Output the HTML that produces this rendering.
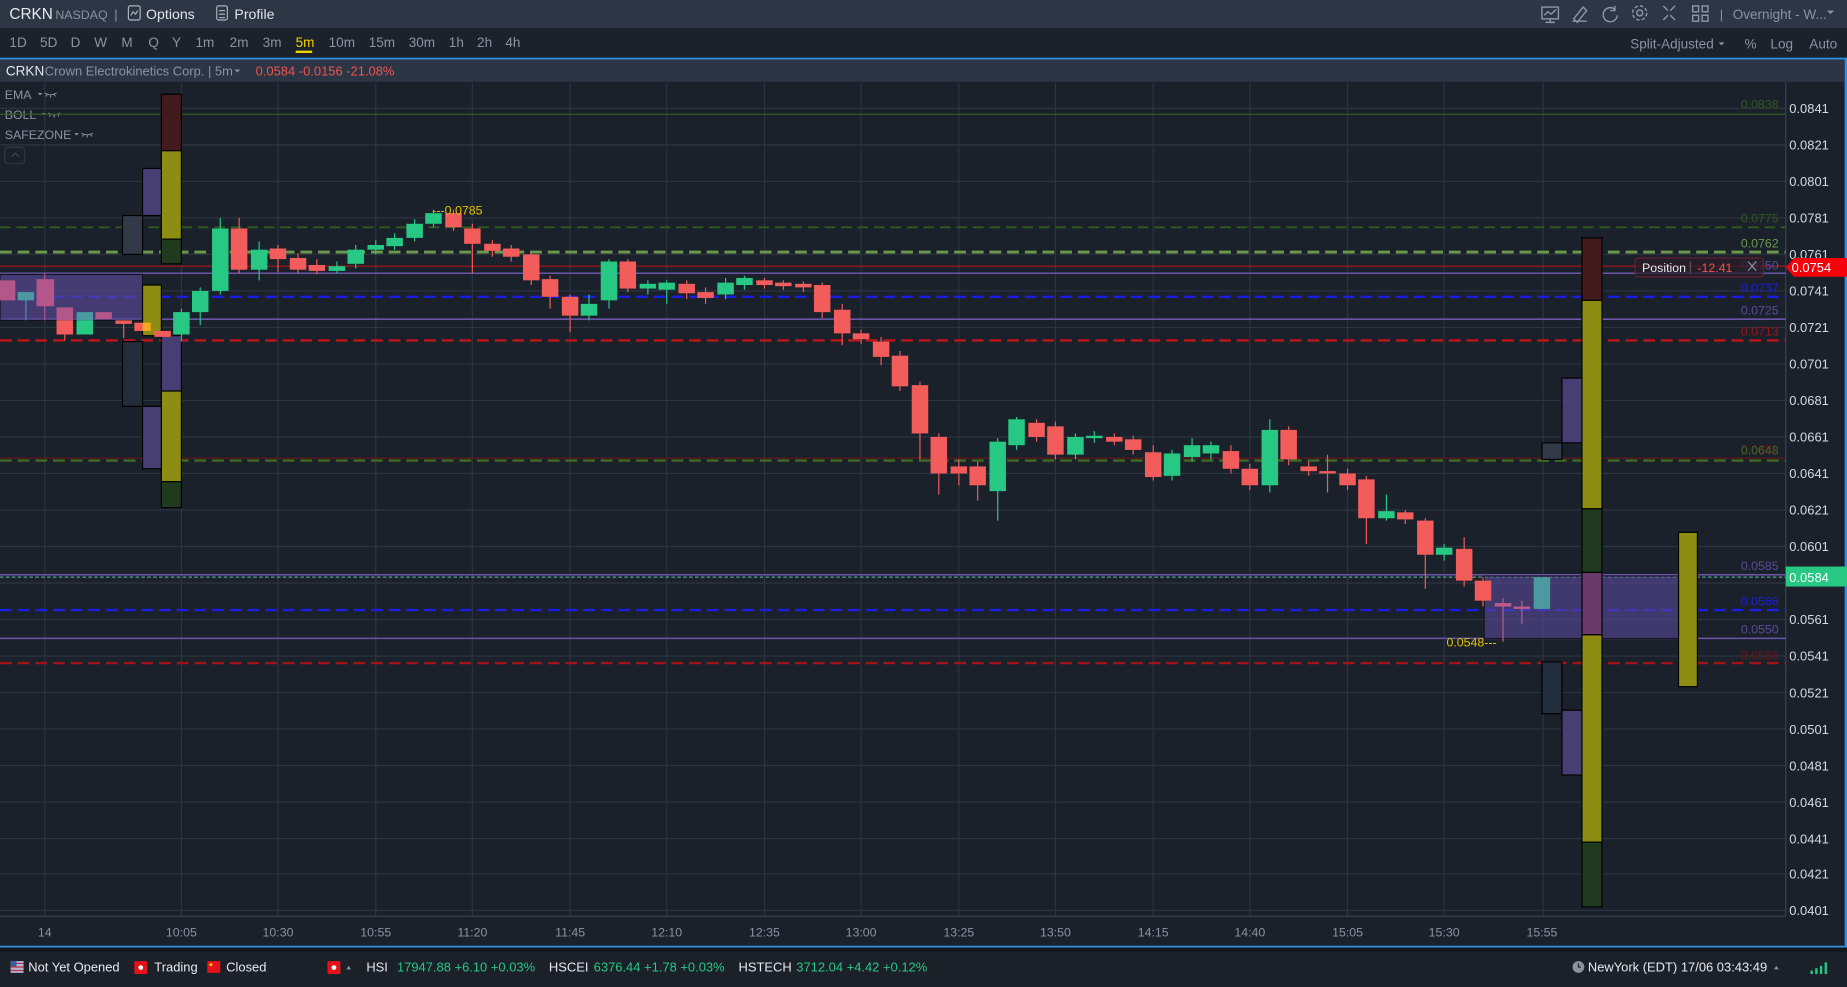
<!DOCTYPE html>
<html><head><meta charset="utf-8"><style>
html,body{margin:0;padding:0;background:#1b212b;overflow:hidden}
svg{display:block}
text{font-family:"Liberation Sans",sans-serif}
</style></head><body>
<svg width="1847" height="987" viewBox="0 0 1568 838" preserveAspectRatio="none" xmlns="http://www.w3.org/2000/svg">
<rect x="0" y="0" width="1568" height="838" fill="#1b212b"/>
<!-- top bar -->
<rect x="0" y="0" width="1568" height="24" fill="#2d3644"/>
<text x="8" y="16" font-size="13" fill="#e6e9ee">CRKN</text>
<text x="47" y="16" font-size="10.5" fill="#8a93a0">NASDAQ</text>
<text x="97" y="16" font-size="11" fill="#8a93a0">|</text>
<rect x="109" y="5" width="10" height="12" rx="1.5" fill="none" stroke="#aab2bd" stroke-width="1"/>
<path d="M111 13 L113 10 L115 12 L117 9" fill="none" stroke="#aab2bd"/>
<text x="124" y="16" font-size="12" fill="#e0e4ea">Options</text>
<rect x="184" y="5" width="9" height="12" rx="1.5" fill="none" stroke="#aab2bd"/>
<path d="M186 9h5M186 12h5M186 15h5" stroke="#aab2bd"/>
<text x="199" y="16" font-size="12" fill="#e0e4ea">Profile</text>
<g fill="none" stroke="#8e97a3" stroke-width="1.2">
<rect x="1309" y="6" width="14" height="10"/><path d="M1316 16v3M1312 19h8M1311 13l3-3 3 2 4-4"/>
<path d="M1335 18h12M1336 16l8-10 3 3-8 10z"/>
<path d="M1371 8a6 6 0 1 0 2 5M1371 5v4h-4"/>
<circle cx="1392" cy="11" r="2.5"/><circle cx="1392" cy="11" r="6" stroke-dasharray="3 1.7"/>
<path d="M1412 5l4 4M1422 5l-4 4M1412 17l4-4M1422 17l-4-4"/>
<rect x="1437" y="5" width="5" height="5"/><rect x="1445" y="5" width="5" height="5"/><rect x="1437" y="13" width="5" height="5"/><rect x="1445" y="13" width="5" height="5"/>
</g>
<text x="1460" y="16" font-size="11" fill="#8a93a0">|</text>
<text x="1471" y="16" font-size="11.5" fill="#8a93a0">Overnight - W...</text>
<path d="M1551 9l3 3 3-3z" fill="#8a93a0"/>
<!-- timeframe bar -->
<rect x="0" y="24" width="1568" height="25" fill="#1c222c"/>
<g font-size="11.5" fill="#8a93a0">
<text x="8" y="40">1D</text><text x="34" y="40">5D</text><text x="60" y="40">D</text><text x="80" y="40">W</text><text x="103" y="40">M</text><text x="126" y="40">Q</text><text x="146" y="40">Y</text><text x="166" y="40">1m</text><text x="195" y="40">2m</text><text x="223" y="40">3m</text><text x="251" y="40" fill="#f2d200">5m</text><text x="279" y="40">10m</text><text x="313" y="40">15m</text><text x="347" y="40">30m</text><text x="381" y="40">1h</text><text x="405" y="40">2h</text><text x="429" y="40">4h</text>
<text x="1384" y="41">Split-Adjusted</text><text x="1481" y="41">%</text><text x="1503" y="41">Log</text><text x="1536" y="41">Auto</text>
</g>
<path d="M1459 36l2.5 2.5 2.5-2.5z" fill="#8a93a0"/>
<rect x="251" y="43" width="14" height="2" fill="#f2d200"/>
<rect x="0" y="49" width="1568" height="1.5" fill="#2e8fe6"/>
<rect x="1566" y="49" width="2" height="755" fill="#2e8fe6"/>
<!-- info bar -->
<rect x="0" y="50.5" width="1566" height="19" fill="#2c3543"/>
<text x="5" y="64" font-size="11.5" fill="#e6e9ee">CRKN</text>
<text x="38" y="64" font-size="11" fill="#8a93a0">Crown Electrokinetics Corp. | 5m</text>
<path d="M199 59l2.5 2.5 2.5-2.5z" fill="#8a93a0"/>
<text x="217" y="64" font-size="11" fill="#f2524f">0.0584 -0.0156 -21.08%</text>
<!-- grid -->
<g stroke="#2c3440" stroke-width="1">
<path d="M0 92H1516M0 123H1516M0 154H1516M0 185H1516M0 216H1516M0 247H1516M0 278H1516M0 309H1516M0 340H1516M0 371H1516M0 402H1516M0 433H1516M0 464H1516M0 495H1516M0 526H1516M0 557H1516M0 588H1516M0 619H1516M0 650H1516M0 681H1516M0 712H1516M0 742H1516M0 773H1516"/>
<path d="M38 70V778M154 70V778M236 70V778M319 70V778M401 70V778M484 70V778M566 70V778M649 70V778M731 70V778M814 70V778M896 70V778M979 70V778M1061 70V778M1144 70V778M1226 70V778M1310 70V778"/>
<path d="M1516 70V778M0 778H1516" stroke="#394250"/>
</g>
<!-- indicators -->
<g font-size="10.5" fill="#8a93a0">
<text x="4" y="84">EMA</text><text x="4" y="101">BOLL</text><text x="4" y="118">SAFEZONE</text>
</g>
<g fill="#8a93a0"><path d="M32 79l2 2 2-2z"/><path d="M35 96l2 2 2-2z"/><path d="M63 113l2 2 2-2z"/></g>
<g fill="none" stroke="#8a93a0" stroke-width="0.8"><path d="M38 79q5 3 10 0M40 80l-1 2M43 81v2M46 80l1 2"/><path d="M41 96q5 3 10 0M43 97l-1 2M46 98v2M49 97l1 2"/><path d="M69 113q5 3 10 0M71 114l-1 2M74 115v2M77 114l1 2"/></g>
<rect x="4" y="125" width="17" height="14" rx="3" fill="none" stroke="#2f3845"/>
<path d="M10 133l3-3 3 3" fill="none" stroke="#3e4754"/>
<!-- level lines -->
<g fill="none">
<path d="M0 97H1516" stroke="#2f5a1e" stroke-width="1"/>
<path d="M0 193H1516" stroke="#2f5a1e" stroke-width="1.5" stroke-dasharray="9 5"/>
<path d="M0 214H1516" stroke="#6a9a4a" stroke-width="2.5" stroke-dasharray="10 5"/>
<path d="M0 226H1516" stroke="#b0151a" stroke-width="1"/>
<path d="M0 232H1516" stroke="#6a55a8" stroke-width="1.3"/>
<path d="M0 252H1516" stroke="#1a1ee0" stroke-width="2" stroke-dasharray="10 5"/>
<path d="M0 271H1516" stroke="#6a55a8" stroke-width="1.3"/>
<path d="M0 289H1516" stroke="#c0141a" stroke-width="2" stroke-dasharray="10 5"/>
<path d="M0 389H1516" stroke="#6a1518" stroke-width="1"/>
<path d="M0 391H1516" stroke="#3f6a22" stroke-width="2" stroke-dasharray="10 5"/>
<path d="M0 488H1516" stroke="#6a55a8" stroke-width="1.3"/>
<path d="M0 490H1516" stroke="#5fc0b0" stroke-width="0.8" stroke-dasharray="3 2"/>
<path d="M0 518H1516" stroke="#1a1ee0" stroke-width="2" stroke-dasharray="10 5"/>
<path d="M0 542H1516" stroke="#6a55a8" stroke-width="1.3"/>
<path d="M0 563H1516" stroke="#a01418" stroke-width="2" stroke-dasharray="10 5"/>
</g>
<g font-size="10.5" text-anchor="end">
<text x="1510" y="92" fill="#2f5a1e">0.0838</text>
<text x="1510" y="189" fill="#2f5a1e">0.0775</text>
<text x="1510" y="210" fill="#6a9a4a">0.0762</text>
<text x="1510" y="229" fill="#5a4a98">0.0750</text>
<text x="1510" y="248" fill="#1a1ee0">0.0737</text>
<text x="1510" y="267" fill="#5a4a98">0.0725</text>
<text x="1510" y="285" fill="#a01418">0.0713</text>
<text x="1510" y="385" fill="#6a1518">0.0651</text>
<text x="1510" y="386" fill="#3f6a22">0.0648</text>
<text x="1510" y="484" fill="#5a4a98">0.0585</text>
<text x="1510" y="514" fill="#1a1ee0">0.0566</text>
<text x="1510" y="538" fill="#5a4a98">0.0550</text>
<text x="1510" y="560" fill="#6a1518">0.0536</text>
</g>
<!-- left purple box -->
<rect x="0" y="233" width="121" height="39" fill="#5a4a9a" fill-opacity="0.65" stroke="#15121f" stroke-width="1"/>
<!-- left volume profile -->
<g stroke="#000" stroke-width="1">
<rect x="137" y="80" width="17" height="48" fill="#431a1c"/>
<rect x="137" y="128" width="17" height="75" fill="#8d8d14"/>
<rect x="137" y="203" width="17" height="21" fill="#1f3a1e"/>
<rect x="121" y="143" width="16" height="40" fill="#473e74"/>
<rect x="104" y="183" width="17" height="33" fill="#323a47"/>
<rect x="121" y="242" width="16" height="43" fill="#8d8d14"/>
<rect x="137" y="285" width="17" height="47" fill="#473e74"/>
<rect x="137" y="332" width="17" height="77" fill="#8d8d14"/>
<rect x="137" y="409" width="17" height="22" fill="#1f3a1e"/>
<rect x="104" y="290" width="17" height="55" fill="#232c3a"/>
<rect x="121" y="345" width="16" height="53" fill="#473e74"/>
</g>
<!-- right volume profile + box -->
<rect x="1260" y="489" width="165" height="53" fill="#5a4a9a" fill-opacity="0.6" stroke="#15121f"/>
<g stroke="#000" stroke-width="1">
<rect x="1343" y="202" width="17" height="53" fill="#431a1c"/>
<rect x="1343" y="255" width="17" height="177" fill="#8d8d14"/>
<rect x="1343" y="432" width="17" height="54" fill="#1f3a1e"/>
<rect x="1343" y="486" width="17" height="53" fill="#6a3a6a"/>
<rect x="1343" y="539" width="17" height="176" fill="#8d8d14"/>
<rect x="1343" y="715" width="17" height="55" fill="#1f3a1e"/>
<rect x="1309" y="376" width="17" height="14" fill="#323a47"/>
<rect x="1309" y="562" width="17" height="44" fill="#232c3a"/>
<rect x="1326" y="321" width="17" height="55" fill="#473e74"/>
<rect x="1326" y="603" width="17" height="55" fill="#473e74"/>
<rect x="1425" y="452" width="16" height="131" fill="#8d8d14"/>
</g>
<!-- left small candles -->
<g>
<rect x="0" y="238" width="13" height="17" fill="#b3568a"/>
<rect x="15" y="248" width="14" height="7" fill="#4a9aa0"/><path d="M22 255v17" stroke="#4a9aa0"/>
<rect x="31" y="237" width="15" height="23" fill="#b3568a"/><path d="M38 232v40" stroke="#b3568a"/>
<rect x="48" y="261" width="14" height="11" fill="#b3568a"/><rect x="48" y="272" width="14" height="12" fill="#f25c5a"/><path d="M55 284v5" stroke="#f25c5a"/>
<rect x="65" y="265" width="14" height="7" fill="#4a9aa0"/><rect x="65" y="272" width="14" height="12" fill="#26c884"/>
<rect x="81" y="265" width="14" height="6" fill="#b3568a"/>
<rect x="98" y="272" width="14" height="3" fill="#f25c5a"/><path d="M105 275v12" stroke="#f25c5a"/>
<rect x="114" y="274" width="7" height="7" fill="#f25c5a"/><rect x="121" y="274" width="7" height="7" fill="#f5a623"/>
<rect x="131" y="281" width="14" height="5" fill="#f25c5a"/>
</g>
<g stroke-width="1">
<g fill="#26c884" stroke="#26c884">
<path d="M154 262V290M170 244V276M187 185V250M220 205V238M286 222V232M302 208V228M319 204V216M335 198V212M352 186V205M368 178V193M500 250V272M517 220V262M550 238V250M566 238V258M616 236V254M632 234V246M847 372V442M863 354V382M913 368V390M929 366V376M995 382V408M1012 372V392M1028 375V390M1078 356V418M1177 420V442M1226 462V476"/>
<rect x="147" y="265" width="14" height="19" stroke="none"/>
<rect x="163" y="247" width="14" height="18" stroke="none"/>
<rect x="180" y="194" width="14" height="53" stroke="none"/>
<rect x="213" y="212" width="14" height="17" stroke="none"/>
<rect x="279" y="226" width="14" height="4" stroke="none"/>
<rect x="295" y="212" width="14" height="12" stroke="none"/>
<rect x="312" y="208" width="14" height="4" stroke="none"/>
<rect x="328" y="202" width="14" height="7" stroke="none"/>
<rect x="345" y="190" width="14" height="12" stroke="none"/>
<rect x="361" y="181" width="14" height="9" stroke="none"/>
<rect x="493" y="258" width="14" height="10" stroke="none"/>
<rect x="510" y="222" width="14" height="33" stroke="none"/>
<rect x="543" y="241" width="14" height="4" stroke="none"/>
<rect x="559" y="240" width="14" height="6" stroke="none"/>
<rect x="609" y="240" width="14" height="10" stroke="none"/>
<rect x="625" y="236" width="14" height="6" stroke="none"/>
<rect x="840" y="375" width="14" height="42" stroke="none"/>
<rect x="856" y="356" width="14" height="22" stroke="none"/>
<rect x="906" y="371" width="14" height="15" stroke="none"/>
<rect x="922" y="370" width="14" height="2" stroke="none"/>
<rect x="988" y="385" width="14" height="19" stroke="none"/>
<rect x="1005" y="378" width="14" height="10" stroke="none"/>
<rect x="1021" y="378" width="14" height="7" stroke="none"/>
<rect x="1071" y="365" width="14" height="47" stroke="none"/>
<rect x="1170" y="434" width="14" height="6" stroke="none"/>
<rect x="1219" y="465" width="14" height="6" stroke="none"/>
</g>
<g fill="#f25c5a" stroke="#f25c5a">
<path d="M203 185V232M236 208V231M253 215V232M269 220V233M385 178V196M401 190V232M418 204V218M434 208V222M451 213V242M467 234V262M484 250V282M533 220V248M583 238V254M599 244V258M649 236V245M665 238V246M682 239V248M698 240V270M715 258V293M731 280V292M748 286V310M764 298V332M781 324V390M797 368V420M814 390V412M830 392V425M880 356V375M896 358V390M946 368V378M962 370V386M979 378V408M1045 378V402M1061 394V416M1094 362V395M1111 392V404M1127 386V418M1144 398V416M1160 404V462M1193 433V445M1210 440V500M1243 456V498M1259 490V515"/>
<rect x="196" y="194" width="14" height="35" stroke="none"/>
<rect x="229" y="211" width="14" height="9" stroke="none"/>
<rect x="246" y="219" width="14" height="10" stroke="none"/>
<rect x="262" y="225" width="14" height="5" stroke="none"/>
<rect x="378" y="181" width="14" height="12" stroke="none"/>
<rect x="394" y="194" width="14" height="13" stroke="none"/>
<rect x="411" y="207" width="14" height="6" stroke="none"/>
<rect x="427" y="211" width="14" height="7" stroke="none"/>
<rect x="444" y="216" width="14" height="22" stroke="none"/>
<rect x="460" y="237" width="14" height="15" stroke="none"/>
<rect x="477" y="252" width="14" height="16" stroke="none"/>
<rect x="526" y="222" width="14" height="23" stroke="none"/>
<rect x="576" y="241" width="14" height="8" stroke="none"/>
<rect x="592" y="248" width="14" height="5" stroke="none"/>
<rect x="642" y="238" width="14" height="4" stroke="none"/>
<rect x="658" y="240" width="14" height="3" stroke="none"/>
<rect x="675" y="241" width="14" height="3" stroke="none"/>
<rect x="691" y="242" width="14" height="23" stroke="none"/>
<rect x="708" y="263" width="14" height="20" stroke="none"/>
<rect x="724" y="283" width="14" height="5" stroke="none"/>
<rect x="741" y="290" width="14" height="13" stroke="none"/>
<rect x="757" y="302" width="14" height="26" stroke="none"/>
<rect x="774" y="327" width="14" height="41" stroke="none"/>
<rect x="790" y="371" width="14" height="31" stroke="none"/>
<rect x="807" y="396" width="14" height="6" stroke="none"/>
<rect x="823" y="396" width="14" height="16" stroke="none"/>
<rect x="873" y="359" width="14" height="12" stroke="none"/>
<rect x="889" y="362" width="14" height="24" stroke="none"/>
<rect x="939" y="371" width="14" height="4" stroke="none"/>
<rect x="955" y="373" width="14" height="9" stroke="none"/>
<rect x="972" y="384" width="14" height="21" stroke="none"/>
<rect x="1038" y="383" width="14" height="15" stroke="none"/>
<rect x="1054" y="398" width="14" height="14" stroke="none"/>
<rect x="1087" y="365" width="14" height="25" stroke="none"/>
<rect x="1104" y="396" width="14" height="4" stroke="none"/>
<rect x="1120" y="400" width="14" height="2" stroke="none"/>
<rect x="1137" y="402" width="14" height="10" stroke="none"/>
<rect x="1153" y="407" width="14" height="33" stroke="none"/>
<rect x="1186" y="435" width="14" height="6" stroke="none"/>
<rect x="1203" y="442" width="14" height="29" stroke="none"/>
<rect x="1236" y="466" width="14" height="27" stroke="none"/>
<rect x="1252" y="493" width="14" height="17" stroke="none"/>
</g>
<path d="M1276 508V545M1292 510V530" stroke="#c05a8a"/>
<rect x="1269" y="512" width="14" height="3" fill="#c05a8a"/>
<rect x="1285" y="515" width="14" height="2" fill="#c05a8a"/>
<rect x="1302" y="490" width="14" height="27" fill="#4a9aa0"/>
</g>
<text x="367" y="182" font-size="10.5" fill="#e6c000">---0.0785</text>
<text x="1228" y="549" font-size="10.5" fill="#e6c000">0.0548---</text>
<!-- position label -->
<rect x="1388" y="219" width="109" height="16" rx="2" fill="#2a1e28" fill-opacity="0.7" stroke="#6a2030"/>
<text x="1394" y="231" font-size="10.5" fill="#e6e9ee">Position</text>
<path d="M1435 222v10" stroke="#555"/>
<text x="1441" y="231" font-size="10.5" fill="#f2524f">-12.41</text>
<path d="M1484 222l7 8M1491 222l-7 8" stroke="#8a93a0"/>
<!-- price axis -->
<g font-size="11" fill="#d6dae0">
<text x="1519" y="96">0.0841</text><text x="1519" y="127">0.0821</text><text x="1519" y="158">0.0801</text><text x="1519" y="189">0.0781</text><text x="1519" y="220">0.0761</text><text x="1519" y="251">0.0741</text><text x="1519" y="282">0.0721</text><text x="1519" y="313">0.0701</text><text x="1519" y="344">0.0681</text><text x="1519" y="375">0.0661</text><text x="1519" y="406">0.0641</text><text x="1519" y="437">0.0621</text><text x="1519" y="468">0.0601</text><text x="1519" y="530">0.0561</text><text x="1519" y="561">0.0541</text><text x="1519" y="592">0.0521</text><text x="1519" y="623">0.0501</text><text x="1519" y="654">0.0481</text><text x="1519" y="685">0.0461</text><text x="1519" y="716">0.0441</text><text x="1519" y="746">0.0421</text><text x="1519" y="777">0.0401</text>
</g>
<path d="M1516 227l7-8H1568V235H1523z" fill="#f5000a"/>
<text x="1521" y="231" font-size="11" fill="#fff">0.0754</text>
<rect x="1516" y="481" width="52" height="17" fill="#26c884"/>
<text x="1519" y="494" font-size="11" fill="#fff">0.0584</text>
<!-- time axis -->
<g font-size="10.5" fill="#8a93a0" text-anchor="middle">
<text x="38" y="795">14</text><text x="154" y="795">10:05</text><text x="236" y="795">10:30</text><text x="319" y="795">10:55</text><text x="401" y="795">11:20</text><text x="484" y="795">11:45</text><text x="566" y="795">12:10</text><text x="649" y="795">12:35</text><text x="731" y="795">13:00</text><text x="814" y="795">13:25</text><text x="896" y="795">13:50</text><text x="979" y="795">14:15</text><text x="1061" y="795">14:40</text><text x="1144" y="795">15:05</text><text x="1226" y="795">15:30</text><text x="1309" y="795">15:55</text>
</g>
<rect x="0" y="803" width="1568" height="1.5" fill="#2e8fe6"/>
<!-- status bar -->
<rect x="0" y="804.5" width="1568" height="4" fill="#12161d"/>
<rect x="0" y="808" width="1568" height="30" fill="#1b2029"/>
<rect x="9" y="816" width="11" height="10" fill="#b0b8d8"/><rect x="9" y="816" width="5" height="5" fill="#3c5aa0"/><path d="M14 818h6M9 821h11M9 824h11" stroke="#c03040" stroke-width="1"/>
<g font-size="11" fill="#e6e9ee">
<text x="24" y="825">Not Yet Opened</text>
<text x="131" y="825">Trading</text>
<text x="192" y="825">Closed</text>
<text x="311" y="825">HSI</text>
<text x="466" y="825">HSCEI</text>
<text x="627" y="825">HSTECH</text>
<text x="1348" y="825">NewYork (EDT) 17/06 03:43:49</text>
</g>
<rect x="114" y="816" width="11" height="11" rx="1" fill="#e6121a"/><circle cx="119.5" cy="821.5" r="2" fill="#fff"/>
<rect x="176" y="816" width="11" height="10" fill="#e6121a"/><circle cx="179" cy="819" r="1.3" fill="#f5d000"/>
<rect x="278" y="816" width="11" height="11" rx="1" fill="#e6121a"/><circle cx="283.5" cy="821.5" r="2" fill="#fff"/>
<path d="M294 823l2-3 2 3z" fill="#8a93a0"/>
<g font-size="11" fill="#26c884">
<text x="337" y="825">17947.88 +6.10 +0.03%</text>
<text x="504" y="825">6376.44 +1.78 +0.03%</text>
<text x="676" y="825">3712.04 +4.42 +0.12%</text>
</g>
<circle cx="1340" cy="821" r="5" fill="#8a93a0"/><path d="M1340 818v3h2" stroke="#1b2029" fill="none"/>
<path d="M1506 823l2-3 2 3z" fill="#8a93a0"/>
<g fill="#26c884"><rect x="1537" y="824" width="2" height="3"/><rect x="1541" y="822" width="2" height="5"/><rect x="1545" y="820" width="2" height="7"/><rect x="1549" y="817" width="2" height="10"/></g>
</svg>
</body></html>
